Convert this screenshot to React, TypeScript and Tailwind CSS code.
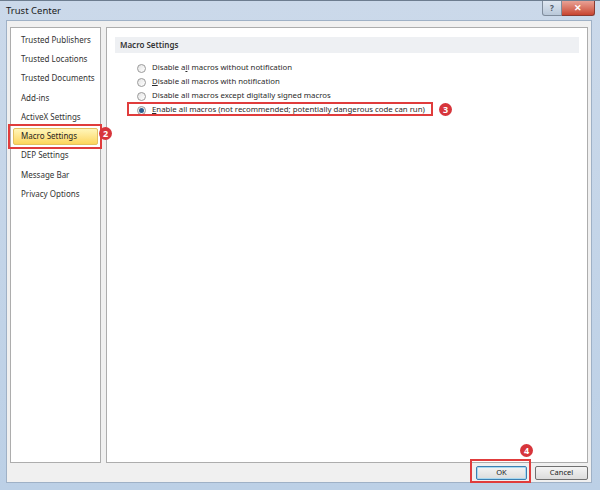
import * as React from "react";

const navItems = [
  "Trusted Publishers",
  "Trusted Locations",
  "Trusted Documents",
  "Add-ins",
  "ActiveX Settings",
  "Macro Settings",
  "DEP Settings",
  "Message Bar",
  "Privacy Options",
];

function Badge({ n, className }: { n: string; className: string }) {
  return (
    <span
      className={
        "absolute flex h-[13px] w-[13px] items-center justify-center rounded-full bg-[#d7353b] text-[9px] font-bold leading-none text-white " +
        className
      }
    >
      {n}
    </span>
  );
}

function Radio({ checked }: { checked?: boolean }) {
  return (
    <span className="flex h-[9px] w-[9px] items-center justify-center rounded-full border border-[#9a9a9a] bg-gradient-to-br from-[#e4e4e4] to-[#ffffff]">
      {checked && <span className="h-[5px] w-[5px] rounded-full bg-[#2b5f8f]" />}
    </span>
  );
}

export default function App() {
  return (
    <div
      className="relative h-[490px] w-[600px] overflow-hidden bg-gradient-to-b from-[#cbd9ea] to-[#bcd0e6] text-[#1e1e1e]"
      style={{ fontFamily: '"Noto Sans", "Open Sans", sans-serif' }}
    >
      {/* title bar */}
      <div className="flex h-[20px] items-start border-t border-[#6d7d8f] pl-[6px]">
        <span className="mt-[3px] text-[9.5px] text-[#1a1a1a]">Trust Center</span>
        <div className="ml-auto mr-[5px] flex">
          <span className="flex h-[15px] w-[20px] items-center justify-center rounded-bl-[3px] border border-t-0 border-[#7f8c9c] bg-gradient-to-b from-[#dfe7f1] to-[#b9c8d9] text-[8px] font-bold text-[#4b5563]">
            ?
          </span>
          <span className="flex h-[15px] w-[33px] items-center justify-center rounded-br-[3px] border border-l-0 border-t-0 border-[#8a3a30] bg-gradient-to-b from-[#e8a195] to-[#c7432f] text-[9px] font-bold text-white">
            ✕
          </span>
        </div>
      </div>

      {/* client area */}
      <div className="ml-[6px] mr-[8px] flex h-[463px] flex-col border border-[#9fb1c6] bg-[#f0f0f0] px-[3px] pt-[6px]">
        <div className="flex h-[436px] gap-[5px]">
          {/* nav */}
          <div className="relative w-[91px] shrink-0 border border-[#adadad] bg-white pt-[2px]">
            {navItems.map((item) => {
              const active = item === "Macro Settings";
              return (
                <div key={item} className="relative flex h-[19.3px] items-center px-[2px]">
                  {active ? (
                    <>
                      <div className="flex h-[17px] w-full items-center rounded-[2px] border border-[#e3c161] bg-gradient-to-b from-[#fff6b8] to-[#fcd55a] pl-[7px] text-[8px]">
                        {item}
                      </div>
                      <div className="absolute -left-[3px] -right-[2px] -top-[2px] -bottom-[3px] border-2 border-[#e03c3c]" />
                    </>
                  ) : (
                    <span className="pl-[8px] text-[8px] text-[#333]">{item}</span>
                  )}
                </div>
              );
            })}
            <Badge n="2" className="right-[-12px] top-[99px]" />
          </div>

          {/* content */}
          <div className="flex-1 border border-[#adadad] bg-white px-[8px] pt-[9px]">
            <div className="flex h-[16px] items-center bg-[#eef0f3] pl-[5px] text-[8px] font-semibold text-[#333]">
              Macro Settings
            </div>
            <div className="mt-[8px] flex flex-col pl-[22px] text-[7.8px] text-[#2a2a2a]">
              <div className="flex h-[14px] items-center gap-[6px]">
                <Radio />
                <span>
                  Disable a<span className="underline">l</span>l macros without notification
                </span>
              </div>
              <div className="flex h-[14px] items-center gap-[6px]">
                <Radio />
                <span>
                  <span className="underline">D</span>isable all macros with notification
                </span>
              </div>
              <div className="flex h-[14px] items-center gap-[6px]">
                <Radio />
                <span>Disable all macros except digitally signed macros</span>
              </div>
              <div className="relative flex h-[14px] items-center gap-[6px]">
                <Radio checked />
                <span>
                  <span className="underline">E</span>nable all macros (not recommended; potentially dangerous code can run)
                </span>
                <div className="absolute -left-[10px] top-[-1px] h-[14px] w-[306px] border-2 border-[#e03c3c]" />
                <Badge n="3" className="left-[302px] top-[0px]" />
              </div>
            </div>
          </div>
        </div>

        {/* footer buttons */}
        <div className="flex flex-1 items-center justify-end gap-[8px]">
          <div className="relative flex">
            <button className="h-[14px] w-[51px] rounded-[2px] border border-[#3c7fb1] bg-gradient-to-b from-[#f4f4f4] to-[#dcdcdc] text-[7.5px] leading-none text-[#222] shadow-[inset_0_0_0_1px_#a8d8f0]">
              OK
            </button>
            <div className="absolute -left-[6px] -right-[4px] -top-[7px] -bottom-[3px] border-2 border-[#e03c3c]" />
            <Badge n="4" className="right-[-6px] top-[-22px]" />
          </div>
          <button className="h-[14px] w-[53px] rounded-[2px] border border-[#707070] bg-gradient-to-b from-[#f4f4f4] to-[#dcdcdc] text-[7.5px] leading-none text-[#222]">
            Cancel
          </button>
        </div>
      </div>
    </div>
  );
}
